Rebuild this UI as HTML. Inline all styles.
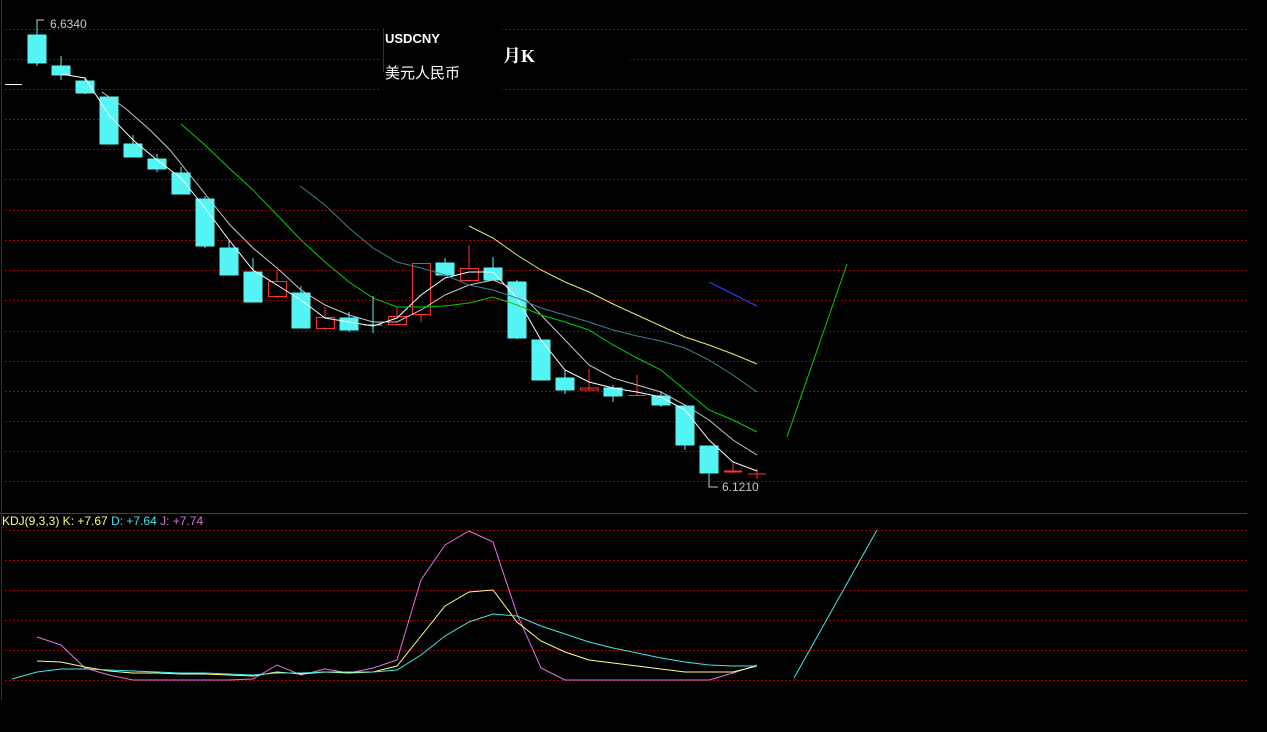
<!DOCTYPE html>
<html><head><meta charset="utf-8"><style>
html,body{margin:0;padding:0;background:#000;width:1267px;height:732px;overflow:hidden}
svg{display:block}
text{font-family:"Liberation Sans","Noto Sans CJK SC",sans-serif}
</style></head><body>
<svg width="1267" height="732" viewBox="0 0 1267 732">
<g stroke="#a00000" stroke-width="1" stroke-dasharray="2,2">
<line x1="5" y1="29.5" x2="1247" y2="29.5"/><line x1="5" y1="59.5" x2="1247" y2="59.5"/>
<line x1="5" y1="89.5" x2="1247" y2="89.5"/><line x1="5" y1="119.5" x2="1247" y2="119.5"/>
<line x1="5" y1="149.5" x2="1247" y2="149.5"/><line x1="5" y1="179.5" x2="1247" y2="179.5"/>
<line x1="5" y1="210.5" x2="1247" y2="210.5"/><line x1="5" y1="240.5" x2="1247" y2="240.5"/>
<line x1="5" y1="270.5" x2="1247" y2="270.5"/><line x1="5" y1="300.5" x2="1247" y2="300.5"/>
<line x1="5" y1="331.5" x2="1247" y2="331.5"/><line x1="5" y1="361.5" x2="1247" y2="361.5"/>
<line x1="5" y1="391.5" x2="1247" y2="391.5"/><line x1="5" y1="421.5" x2="1247" y2="421.5"/>
<line x1="5" y1="451.5" x2="1247" y2="451.5"/><line x1="5" y1="481.5" x2="1247" y2="481.5"/>
<line x1="5" y1="530.5" x2="1247" y2="530.5"/><line x1="5" y1="560.5" x2="1247" y2="560.5"/>
<line x1="5" y1="590.5" x2="1247" y2="590.5"/><line x1="5" y1="620.5" x2="1247" y2="620.5"/>
<line x1="5" y1="650.5" x2="1247" y2="650.5"/><line x1="5" y1="680.5" x2="1247" y2="680.5"/>
</g>
<line x1="1.5" y1="0" x2="1.5" y2="700" stroke="#a00000"/>
<line x1="0" y1="513.5" x2="1247" y2="513.5" stroke="#404040"/>
<rect x="380" y="25" width="122" height="65" fill="#000"/>
<line x1="383.5" y1="28" x2="383.5" y2="72" stroke="#a00000"/>
<text x="385" y="43" fill="#fff" font-size="13" style="font-weight:bold">USDCNY</text>
<text x="385" y="78" fill="#fff" font-size="15">美元人民币</text>
<rect x="500" y="40" width="130" height="30" fill="#000"/>
<text x="503" y="62" fill="#fff" font-size="18" style="font-weight:bold;font-family:'Liberation Serif','Noto Serif CJK SC',serif">月K</text>
<line x1="5" y1="84.5" x2="22" y2="84.5" stroke="#fff"/>
<g stroke="#56f5f5" fill="#56f5f5">
<line x1="37" y1="24" x2="37" y2="66"/><rect x="28" y="35" width="18" height="28"/>
<line x1="61" y1="56" x2="61" y2="80"/><rect x="52" y="66" width="18" height="9"/>
<line x1="85" y1="77" x2="85" y2="94"/><rect x="76" y="81" width="18" height="12"/>
<rect x="100" y="97" width="18" height="47"/>
<line x1="133" y1="135" x2="133" y2="157"/><rect x="124" y="144" width="18" height="13"/>
<line x1="157" y1="154" x2="157" y2="172"/><rect x="148" y="159" width="18" height="10"/>
<line x1="181" y1="167" x2="181" y2="194"/><rect x="172" y="173" width="18" height="21"/>
<line x1="205" y1="196" x2="205" y2="248"/><rect x="196" y="199" width="18" height="47"/>
<line x1="229" y1="240" x2="229" y2="275"/><rect x="220" y="248" width="18" height="27"/>
<line x1="253" y1="258" x2="253" y2="302"/><rect x="244" y="272" width="18" height="30"/>
<line x1="301" y1="286" x2="301" y2="328"/><rect x="292" y="293" width="18" height="35"/>
<line x1="349" y1="312" x2="349" y2="332"/><rect x="340" y="318" width="18" height="12"/>
<line x1="373" y1="296" x2="373" y2="333"/><line x1="364" y1="325" x2="382" y2="325"/>
<line x1="445" y1="258" x2="445" y2="276"/><rect x="436" y="263" width="18" height="12"/>
<line x1="493" y1="257" x2="493" y2="280"/><rect x="484" y="268" width="18" height="12"/>
<line x1="517" y1="280" x2="517" y2="339"/><rect x="508" y="282" width="18" height="56"/>
<rect x="532" y="340" width="18" height="40"/>
<line x1="565" y1="370" x2="565" y2="394"/><rect x="556" y="378" width="18" height="12"/>
<line x1="613" y1="385" x2="613" y2="402"/><rect x="604" y="388" width="18" height="8"/>
<line x1="661" y1="392" x2="661" y2="407"/><rect x="652" y="396" width="18" height="9"/>
<line x1="685" y1="405" x2="685" y2="450"/><rect x="676" y="406" width="18" height="39"/>
<line x1="709" y1="446" x2="709" y2="487"/><rect x="700" y="446" width="18" height="27"/>
</g>
<g stroke="#ff3030" fill="none">
<line x1="277" y1="270" x2="277" y2="298"/><rect x="268.5" y="281.5" width="18" height="15" fill="#000"/>
<line x1="325" y1="307" x2="325" y2="330"/><rect x="316.5" y="317.5" width="18" height="11" fill="#000"/>
<line x1="397" y1="307" x2="397" y2="325"/><rect x="388.5" y="316.5" width="18" height="8" fill="#000"/>
<line x1="421" y1="314" x2="421" y2="322"/><rect x="412.5" y="263.5" width="18" height="51" fill="#000"/>
<line x1="469" y1="245" x2="469" y2="282"/><rect x="460.5" y="268.5" width="18" height="12" fill="#000"/>
<line x1="589" y1="369" x2="589" y2="390"/><rect x="580.5" y="388" width="18" height="2"/>
<line x1="637" y1="375" x2="637" y2="396"/><line x1="628" y1="395.5" x2="646" y2="395.5"/>
<line x1="733" y1="461" x2="733" y2="473"/><line x1="724" y1="471.5" x2="742" y2="471.5" stroke-width="2"/>
<line x1="757" y1="469" x2="757" y2="479"/><line x1="748" y1="474" x2="766" y2="474"/>
</g>
<g fill="none" stroke-width="1">
<polyline stroke="#fff" points="61,74 85,78 109,115 133,140 157,160 181,178 205,208 229,240 253,270 277,285 301,300 325,318 349,322 373,326 397,318 421,295 445,278 469,272 493,272 517,298 541,340 565,370 589,382 613,388 637,392 661,397 685,410 709,440 733,462 757,471"/>
<polyline stroke="#c8c8c8" points="102,92 125,108 150,130 170,150 190,175 210,200 230,225 253,248 277,268 301,290 325,305 349,315 373,322 397,322 421,310 445,295 469,285 493,280 517,290 541,315 565,340 589,365 613,378 637,385 661,392 685,405 709,420 733,440 757,455"/>
<polyline stroke="#00d000" points="181,124 205,145 229,168 253,190 277,215 301,240 325,262 349,282 373,298 397,307 421,307 445,306 469,303 493,297 517,305 541,315 565,322 589,330 613,345 637,358 661,370 685,390 709,410 733,420 757,432"/>
<polyline stroke="#3a8090" points="300,186 325,205 349,228 373,248 397,262 421,268 445,275 469,285 493,290 517,298 541,308 565,315 589,322 613,330 637,336 661,341 685,348 709,360 733,375 757,392"/>
<polyline stroke="#e8e870" points="469,226 493,238 517,255 541,270 565,282 589,292 613,304 637,315 661,326 685,337 709,345 733,354 757,364"/>
<line x1="709" y1="282" x2="757" y2="306" stroke="#3040ff"/>
<line x1="787" y1="437" x2="847" y2="264" stroke="#00d000"/>
</g>
<g fill="#c8c8c8" font-size="12">
<polyline points="37,24 37,20 44,20" stroke="#c8c8c8" fill="none"/>
<text x="50" y="28">6.6340</text>
<polyline points="709,482 709,487 718,487" stroke="#c8c8c8" fill="none"/>
<text x="722" y="491">6.1210</text>
</g>
<text x="2" y="525" font-size="12"><tspan fill="#ffff80">KDJ(9,3,3) K: +7.67 </tspan><tspan fill="#40e8e8">D: +7.64 </tspan><tspan fill="#e070e0">J: +7.74</tspan></text>
<g fill="none">
<polyline stroke="#e070e0" points="37,637 61,645 85,668 109,675 133,680 157,680 181,680 205,680 229,680 253,679 277,665 301,675 325,669 349,673 373,668 397,660 421,580 445,545 469,531 493,542 517,614 541,668 565,680 589,680 613,680 637,680 661,680 685,680 709,680 733,673 757,665"/>
<polyline stroke="#ffff80" points="37,661 61,662 85,667 109,671 133,673 157,673 181,674 205,674 229,675 253,676 277,672 301,674 325,672 349,673 373,672 397,666 421,636 445,606 469,592 493,590 517,622 541,641 565,652 589,660 613,663 637,666 661,669 685,672 709,672 733,672 757,666"/>
<polyline stroke="#40e8e8" points="12,679 37,672 61,669 85,669 109,670 133,671 157,672 181,673 205,673 229,674 253,675 277,673 301,673 325,672 349,672 373,672 397,670 421,655 445,636 469,622 493,614 517,616 541,626 565,634 589,642 613,648 637,653 661,658 685,662 709,665 733,666 757,666"/>
<line x1="794" y1="678" x2="877" y2="530" stroke="#40e8e8"/>
</g>
</svg>
</body></html>
